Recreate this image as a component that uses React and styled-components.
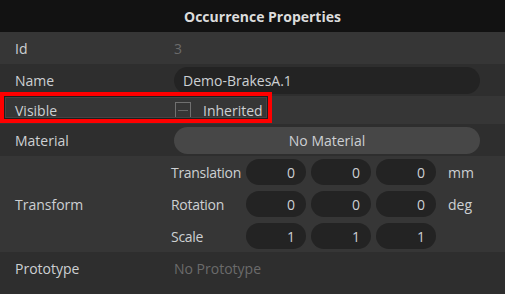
import styled, { createGlobalStyle } from "styled-components";

const colors = {
  header: "#121212",
  rowLight: "#363636",
  rowDark: "#2e2e2e",
  field: "#232323",
  button: "#474747",
  text: "#cdd0d3",
  dim: "#6b6b6b",
  title: "#dcdcdc",
  red: "#ff0000",
};

const GlobalStyle = createGlobalStyle`
  html, body {
    margin: 0;
    background: ${colors.rowDark};
    font-family: "Open Sans", "Noto Sans", sans-serif;
  }
`;

const Panel = styled.div`
  width: 505px;
  height: 294px;
  background: ${colors.rowDark};
  color: ${colors.text};
  font-size: 14px;
  overflow: hidden;
`;

const Header = styled.div`
  height: 32px;
  display: flex;
  align-items: center;
  justify-content: center;
  background: ${colors.header};
  color: ${colors.title};
  font-weight: 700;
  font-size: 14px;
  padding-left: 20px;
`;

const Row = styled.div`
  position: relative;
  display: grid;
  grid-template-columns: 174px 306px;
  align-items: center;
  height: ${({ h }) => h || 32}px;
  background: ${({ light }) => (light ? colors.rowLight : colors.rowDark)};
`;

const Label = styled.div`
  padding-left: 15px;
`;

const DimValue = styled.div`
  color: ${colors.dim};
`;

const TextField = styled.div`
  height: 27px;
  border-radius: 14px;
  background: ${colors.field};
  display: flex;
  align-items: center;
  padding-left: 9px;
`;

const MaterialButton = styled.div`
  height: 27px;
  border-radius: 14px;
  background: ${colors.button};
  display: flex;
  align-items: center;
  justify-content: center;
`;

const CheckRow = styled.div`
  display: flex;
  align-items: center;
  gap: 12px;
  padding-left: 1px;
`;

const Checkbox = styled.div`
  width: 14px;
  height: 14px;
  border: 1px solid #707070;
  display: flex;
  align-items: center;
  justify-content: center;

  &::after {
    content: "";
    width: 10px;
    height: 1px;
    background: #666;
  }
`;

const Highlight = styled.div`
  position: absolute;
  left: 0;
  top: -4px;
  width: 272px;
  height: 31px;
  box-sizing: border-box;
  border: 4px solid ${colors.red};
  box-shadow: inset 0 0 0 1px #1e1e1e, inset 0 0 0 2px #444;
  pointer-events: none;
`;

const TransformGrid = styled.div`
  display: grid;
  grid-template-columns: 70px 60px 60px 60px auto;
  column-gap: 5px;
  row-gap: 6px;
  margin-left: -3px;
`;

const SubLabel = styled.div`
  display: flex;
  align-items: center;
  letter-spacing: -0.3px;
`;

const NumField = styled.div`
  height: 26px;
  border-radius: 13px;
  background: ${colors.field};
  display: flex;
  align-items: center;
  justify-content: flex-end;
  padding-right: 11px;
`;

const Unit = styled.div`
  display: flex;
  align-items: center;
  padding-left: 7px;
`;

const transform = [
  { name: "Translation", values: [0, 0, 0], unit: "mm" },
  { name: "Rotation", values: [0, 0, 0], unit: "deg" },
  { name: "Scale", values: [1, 1, 1], unit: "" },
];

export default function App() {
  return (
    <>
      <GlobalStyle />
      <Panel>
        <Header>Occurrence Properties</Header>

        <Row light>
          <Label>Id</Label>
          <DimValue>3</DimValue>
        </Row>

        <Row>
          <Label>Name</Label>
          <TextField>Demo-BrakesA.1</TextField>
        </Row>

        <Row light h={28}>
          <Label>Visible</Label>
          <CheckRow>
            <Checkbox />
            Inherited
          </CheckRow>
          <Highlight />
        </Row>

        <Row>
          <Label>Material</Label>
          <MaterialButton>No Material</MaterialButton>
        </Row>

        <Row light h={96}>
          <Label>Transform</Label>
          <TransformGrid>
            {transform.map((t) => [
              <SubLabel key={t.name}>{t.name}</SubLabel>,
              ...t.values.map((v, i) => (
                <NumField key={t.name + i}>{v}</NumField>
              )),
              <Unit key={t.name + "u"}>{t.unit}</Unit>,
            ])}
          </TransformGrid>
        </Row>

        <Row>
          <Label>Prototype</Label>
          <DimValue>No Prototype</DimValue>
        </Row>
      </Panel>
    </>
  );
}
